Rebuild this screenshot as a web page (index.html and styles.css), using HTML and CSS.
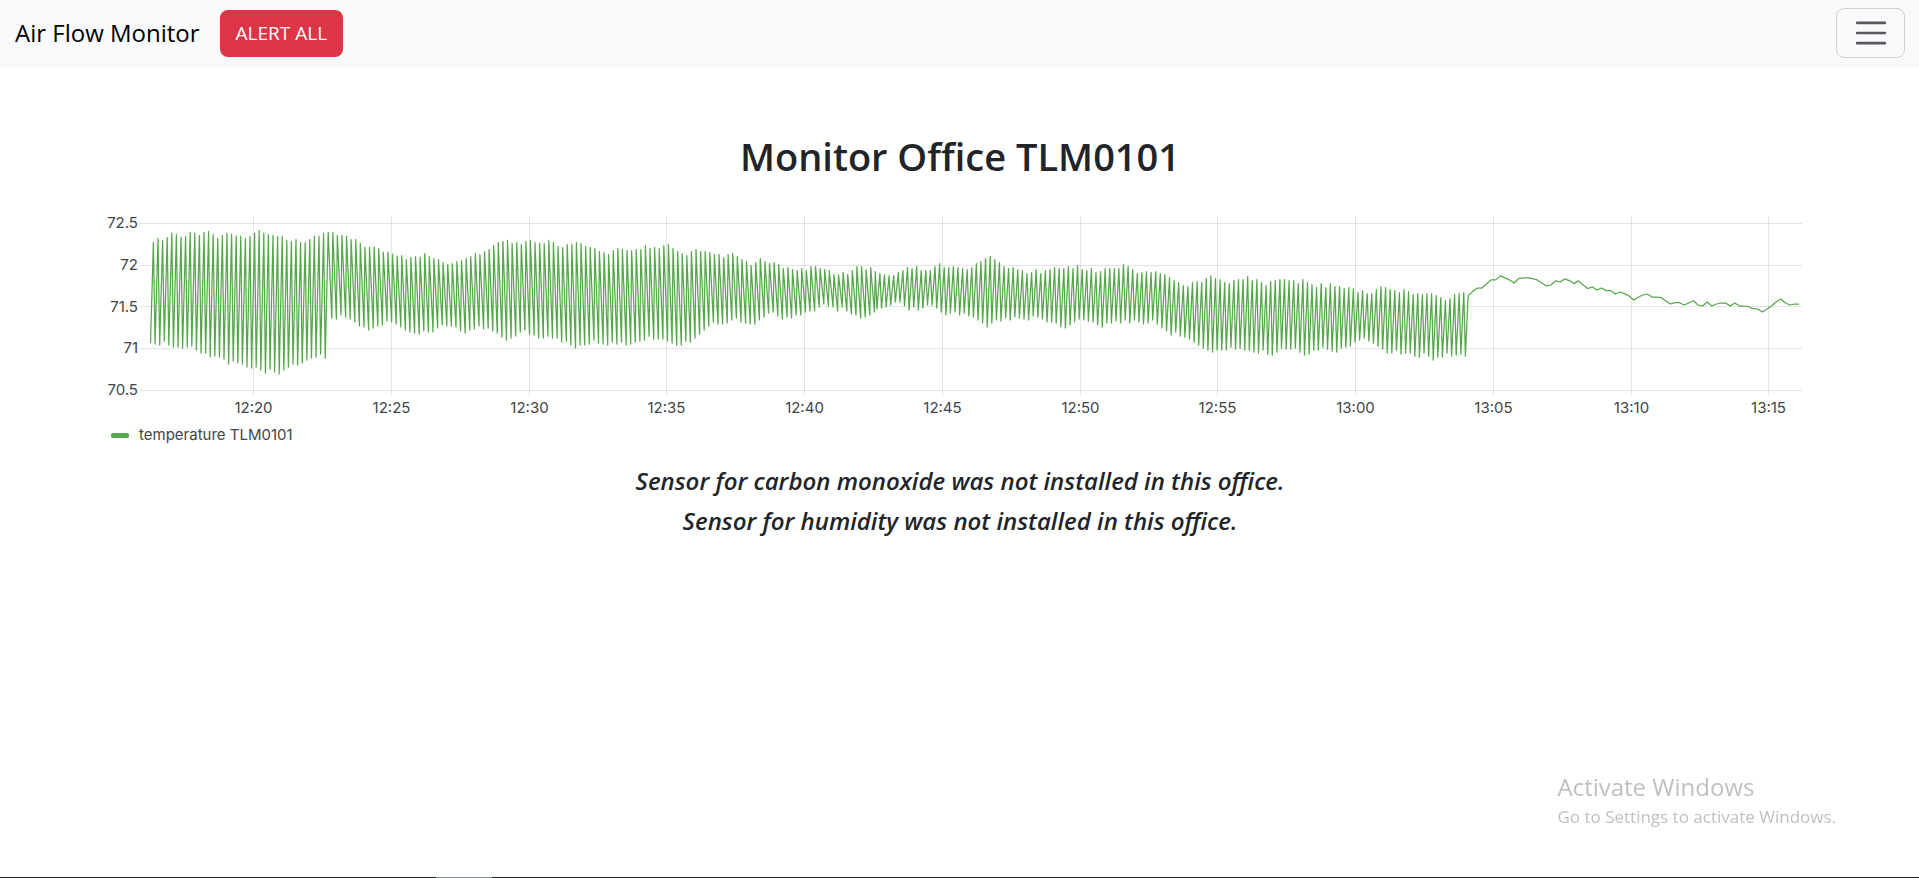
FILE: index.html
```html
<!DOCTYPE html>
<html lang="en">
<head>
<meta charset="utf-8">
<meta name="viewport" content="width=device-width, initial-scale=1">
<title>Air Flow Monitor</title>
<link rel="stylesheet" href="styles.css">
</head>
<body>
<nav class="navbar">
  <a class="brand" href="#">Air Flow Monitor</a>
  <button class="alert-button" type="button">ALERT ALL</button>
  <button class="menu-button" type="button" aria-label="Toggle navigation">
    <svg class="menu-icon" viewBox="0 0 30 30" aria-hidden="true"><path d="M4 7h22M4 15h22M4 23h22"/></svg>
  </button>
</nav>
<main class="content">
  <h1 class="title">Monitor Office TLM0101</h1>
  <section class="panel">
    <svg class="chart" id="chart" role="img" aria-label="Temperature over time"></svg>
    <div class="legend"><span class="legend-mark"></span><span>temperature TLM0101</span></div>
  </section>
  <p class="note">Sensor for carbon monoxide was not installed in this office.</p>
  <p class="note">Sensor for humidity was not installed in this office.</p>
</main>
<aside class="activation">
  <p class="activation-title">Activate Windows</p>
  <p class="activation-text">Go to Settings to activate Windows.</p>
</aside>
<div class="taskbar"><span class="taskbar-item"></span></div>
<script src="chart.js"></script>
</body>
</html>
```
FILE: styles.css
```css
* { box-sizing: border-box; }

body {
  margin: 0;
  min-height: 100vh;
  background: #fff;
  color: #212529;
  font-family: "Open Sans", "Noto Sans", sans-serif;
}

.navbar {
  display: flex;
  align-items: center;
  min-height: 68px;
  padding: 8px 14px 10px 15px;
  background: #f8f9fa;
}

.brand {
  margin-right: 20px;
  color: #000;
  font-size: 24px;
  line-height: 38px;
  text-decoration: none;
}

.alert-button {
  height: 47px;
  padding: 0 16px;
  border: 0;
  border-radius: 8px;
  background: #dc3545;
  color: #fff;
  font: 19px/30px "Open Sans", "Noto Sans", sans-serif;
}

.menu-button {
  display: flex;
  align-items: center;
  justify-content: center;
  width: 69px;
  height: 50px;
  margin-left: auto;
  padding: 0;
  border: 1px solid #d0d1d4;
  border-radius: 8px;
  background: transparent;
}

.menu-icon {
  width: 38px;
  height: 38px;
  fill: none;
  stroke: #58595d;
  stroke-width: 2;
  stroke-linecap: round;
}

.content { padding: 58px 95px 0 96px; }

.title {
  margin: 0;
  font-size: 38px;
  font-weight: 600;
  line-height: 60px;
  text-align: center;
}

.panel {
  margin-top: 30px;
  color: #24292e;
  font: 15px/24px Inter, sans-serif;
}

.chart {
  display: block;
  width: 100%;
  height: 207px;
  overflow: visible;
}

.grid { stroke: rgba(36, 41, 46, 0.12); shape-rendering: crispEdges; }
.series { fill: none; stroke: #56a64b; stroke-width: 1.25; stroke-linejoin: round; }
.label { fill: #3f4449; font: 15px Inter, sans-serif; }

.legend {
  display: flex;
  align-items: center;
  gap: 10px;
  padding-left: 15px;
  color: #3f4449;
}

.legend-mark {
  width: 18px;
  height: 5px;
  border-radius: 2px;
  background: #56a64b;
}

.panel + .note { margin-top: 14px; }

.note {
  margin: 0;
  font-size: 24px;
  font-style: italic;
  font-weight: 600;
  line-height: 40px;
  text-align: center;
}

.activation {
  position: fixed;
  right: 83px;
  bottom: 47px;
  color: #c0c0c0;
}

.activation p { margin: 0; }
.activation-title { font-size: 24px; line-height: 32px; }
.activation-text { font-size: 17px; line-height: 28px; }

.taskbar {
  position: fixed;
  right: 0;
  bottom: 0;
  left: 0;
  height: 1px;
  padding-left: 436px;
  background: #1f2a30;
}

.taskbar-item {
  display: block;
  width: 56px;
  height: 1px;
  background: #8a8f92;
}
```
FILE: chart.js
```javascript
// Raw sensor readings: each step is 0.004 degrees below 72.78.
const highs = [
  127,115,121,112,99,103,111,109,97,99,106,97,94,103,115,106,99,102,108,108,
  115,109,99,91,99,103,106,109,109,121,124,118,127,127,118,108,108,99,97,97,
  106,106,108,118,118,130,141,141,141,145,156,156,162,168,166,178,172,169,171,160,
  169,175,178,187,193,
  190,184,181,175,169,160,163,154,148,136,127,124,121,130,127,133,124,121,127,130,
  130,121,127,139,142,133,133,127,130,139,142,145,154,157,163,151,145,148,151,151,
  148,148,136,145,142,145,136,133,145,154,160,166,154,148,154,154,157,163,163,172,
  163,160,169,178,184,196,187,175,184,190,187,193,205,202,208,211,205,211,199,
  199,205,208,211,223,223,217,223,211,199,199,208,202,214,220,223,227,226,217,211,
  202,205,199,211,211,211,199,190,202,202,199,202,205,208,202,190,184,175,169,178,
  187,199,205,202,208,211,220,217,208,220,211,208,202,205,205,199,205,196,208,211,
  205,217,214,205,205,205,205,193,199,208,220,217,214,217,214,220,223,232,
  241,247,256,259,247,244,247,235,226,235,238,247,250,241,238,238,229,241,238,247,
  256,244,241,238,238,241,241,250,238,247,253,262,250,262,250,259,259,265,262,265,
  277,271,280,280,268,259,262,268,271,277,268,274,283,280,283,280,280,286,292,301,
  295,283,280,277
];
const lows = [
  428,431,434,422,434,440,440,443,440,437,449,458,458,470,467,470,476,491,482,488,
  491,500,503,500,509,518,506,515,521,509,500,491,494,488,479,473,470,461,473,
  353,356,344,350,356,365,377,380,389,383,377,374,362,365,371,380,389,395,398,401,
  392,395,395,383,374,377,
  377,380,392,398,389,386,377,386,383,392,398,410,419,413,407,395,389,401,404,413,
  413,407,413,413,425,422,434,443,434,434,431,419,428,431,434,425,431,425,434,431,
  425,422,419,407,416,416,416,422,428,434,434,422,425,413,401,389,377,365,371,371,
  368,359,353,365,368,371,371,359,350,338,335,347,356,350,353,344,344,335,332,
  332,320,311,317,320,332,320,332,341,344,353,350,344,335,326,323,320,314,305,305,
  317,329,320,329,323,314,314,323,335,344,338,335,344,338,347,350,359,368,380,368,
  359,362,353,359,350,353,356,359,347,350,356,365,365,368,380,383,374,365,356,359,
  362,365,374,380,368,368,362,368,359,368,359,365,371,368,359,371,383,392,
  404,395,407,410,416,425,434,443,449,455,449,449,449,440,446,443,449,449,455,458,
  449,461,464,455,443,446,446,443,455,464,461,449,449,440,446,452,455,443,440,437,
  425,419,413,422,428,437,446,458,458,449,461,458,458,467,470,458,467,479,470,470,
  458,467,464,461,467
];
const steady = [
  286,274,263,263,251,239,239,227,233,239,248,235,233,233,235,239,248,257,254,242,
  245,236,241,250,242,254,265,260,269,263,271,271,281,275,280,287,299,291,284,281,
  290,290,292,302,311,307,307,314,308,301,314,317,305,317,311,308,308,317,308,317,
  317,319,325,326,335,326,317,304,296,308,314,311,311
];

const toTemp = raw => 72.78 - raw / 250;

// Points are [seconds since the first reading, temperature].
const PERIOD = 10.014;
const points = [];
lows.forEach((low, i) => {
  const lead = i > 38 && i < 158 ? 2 : 6.5;
  points.push([i * PERIOD + 7.5 - lead, toTemp(low)]);
  if (i < highs.length) points.push([i * PERIOD + 7.5, toTemp(highs[i])]);
});
steady.forEach((raw, i) => points.push([i * PERIOD + 2871, toTemp(raw)]));

const svg = document.getElementById("chart");
const NS = "http://www.w3.org/2000/svg";

function add(name, attrs, text) {
  const node = document.createElementNS(NS, name);
  for (const key in attrs) node.setAttribute(key, attrs[key]);
  if (text) node.textContent = text;
  svg.appendChild(node);
}

function draw() {
  const left = 54, right = svg.clientWidth - 23;
  const plotLeft = left - 5, top = 7, bottom = 174;
  const x = s => left + s * (right - left) / 3596;
  const y = t => top + (72.5 - t) * (bottom - top) / 2;
  svg.replaceChildren();
  for (let t = 72.5; t >= 70.5; t -= 0.5) {
    const gy = Math.round(y(t) - 0.1) + 0.5;
    add("line", { class: "grid", x1: plotLeft - 5, x2: right + 1, y1: gy, y2: gy });
    add("text", { class: "label", x: 42, y: Math.round(y(t)) + 5, "text-anchor": "end" }, String(t));
  }
  for (let m = 20; m <= 75; m += 5) {
    const gx = Math.floor(x((m - 16) * 60 - 14)) + 0.5;
    const label = (12 + Math.floor(m / 60)) + ":" + String(m % 60).padStart(2, "0");
    add("line", { class: "grid", x1: gx, x2: gx, y1: 0, y2: bottom + 5 });
    add("text", { class: "label", x: gx, y: 197, "text-anchor": "middle" }, label);
  }
  add("polyline", { class: "series", points: points.map(p => x(p[0]).toFixed(1) + "," + (y(p[1]) + 0.5).toFixed(1)).join(" ") });
}

draw();
window.addEventListener("resize", draw);
```
